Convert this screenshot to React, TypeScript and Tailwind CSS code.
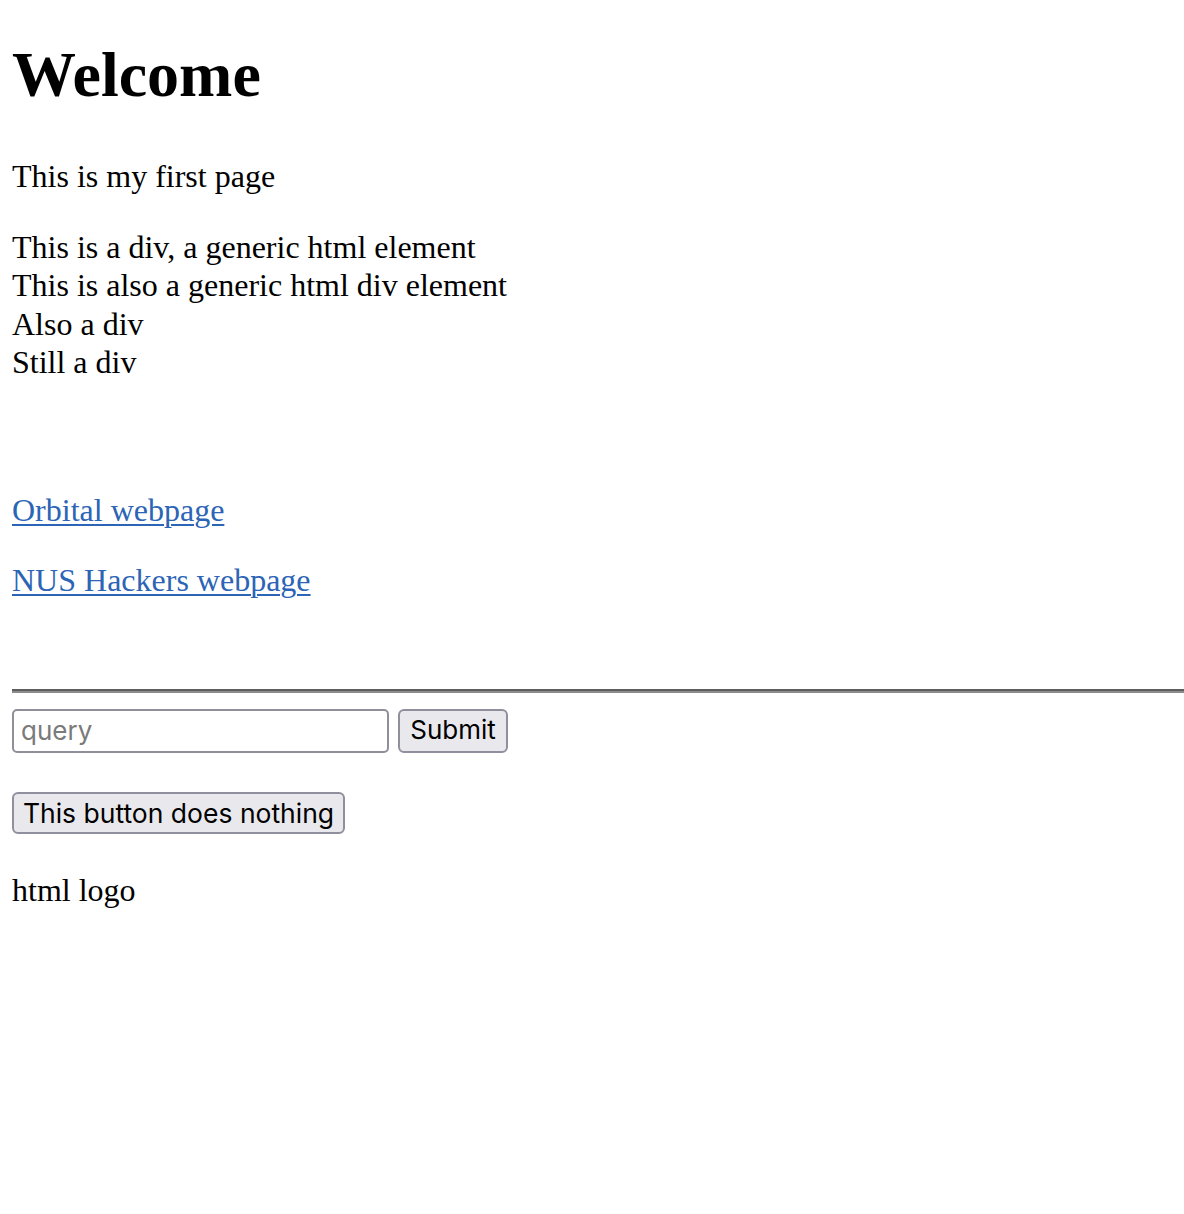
import React from 'react';

export default function App() {
  return (
    <div className="min-h-[1214px] bg-white pl-[12px] pb-10 text-black font-['Liberation_Serif',serif] text-[32px] leading-[38.5px]">
      <h1 className="pt-[38px] text-[64px] leading-[74px] font-bold">Welcome</h1>

      <p className="mt-[45px]">This is my first page</p>

      <div className="mt-[32px]">
        <div>This is a div, a generic html element</div>
        <div>This is also a generic html div element</div>
        <div>Also a div</div>
        <div>Still a div</div>
      </div>

      <p className="mt-[109px]">
        <a href="#" className="text-[#2c64b6] underline underline-offset-[3px] decoration-[2px]">Orbital webpage</a>
      </p>
      <p className="mt-[32px]">
        <a href="#" className="text-[#2c64b6] underline underline-offset-[3px] decoration-[2px]">NUS Hackers webpage</a>
      </p>

      <div className="mt-[89px] h-[4px] border-t-2 border-b-2 border-t-[#5d5d5d] border-b-[#8c8c8c]" />

      <form className="mt-[16px] flex items-center gap-[9px] font-['Inter',sans-serif]" onSubmit={(e) => e.preventDefault()}>
        <input
          type="text"
          placeholder="query"
          className="h-[44px] w-[377px] rounded-[5px] border-2 border-[#8f8f99] bg-white px-[7px] text-[26px] placeholder:text-[#7a7a7a] outline-none"
        />
        <button
          type="submit"
          className="h-[44px] w-[110px] rounded-[6px] border-2 border-[#8f8f9d] bg-[#e9e9ed] text-[26px] text-black"
        >
          Submit
        </button>
      </form>

      <div className="mt-[39px] font-['Inter',sans-serif]">
        <button className="h-[42px] w-[333px] rounded-[6px] border-2 border-[#8f8f9d] bg-[#e9e9ed] text-[26.5px] text-black">
          This button does nothing
        </button>
      </div>

      <p className="mt-[37px]">html logo</p>
    </div>
  );
}
